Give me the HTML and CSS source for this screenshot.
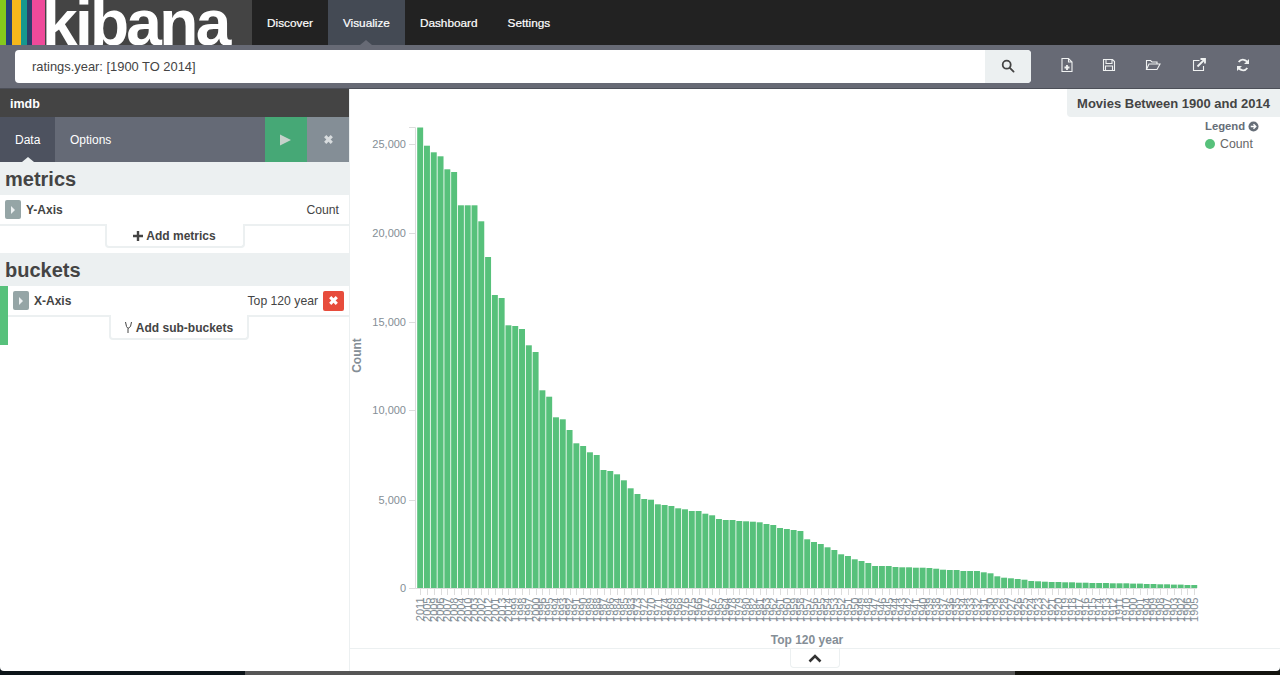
FILE: index.html
```html
<!DOCTYPE html>
<html lang="en">
<head>
<meta charset="utf-8">
<title>Visualize - Kibana</title>
<link rel="stylesheet" href="styles.css">
</head>
<body>
<div class="window">
  <header class="navbar">
    <div class="logo">
      <span class="stripe s1"></span><span class="stripe s2"></span><span class="stripe s3"></span><span class="stripe s4"></span><span class="stripe s5"></span><span class="stripe s6"></span>
      <span class="wordmark">kibana</span>
    </div>
    <nav class="nav-links">
      <a class="nav-link">Discover</a>
      <a class="nav-link active">Visualize</a>
      <a class="nav-link">Dashboard</a>
      <a class="nav-link">Settings</a>
    </nav>
  </header>

  <div class="querybar">
    <div class="search">
      <div class="search-input">ratings.year: [1900 TO 2014]</div>
      <div class="search-btn">
        <svg class="icon-search" viewBox="0 0 14 14"><circle cx="5.7" cy="5.7" r="4" /><path d="M8.8 8.8l3.8 3.8" /></svg>
      </div>
    </div>
    <div class="tools">
      <svg class="tool" viewBox="0 0 16 16"><path d="M3 1.500h6.500l3.500 3.500v9.500H3z M9.500 1.500V5H13" /><path class="thick" d="M8 8v5M5.500 10.500h5" /></svg>
      <svg class="tool tool-tight" viewBox="0 0 16 16"><path d="M2.500 2.500h9l2 2v9h-11z M5 2.500v4h6v-4 M4.500 13.500v-4.500h7v4.500" /></svg>
      <svg class="tool" viewBox="0 0 16 16"><path d="M1.500 12.500v-9h4l1.500 1.500h5v2 M1.500 12.500l2.500-5.500h11l-3 5.500z" /></svg>
      <svg class="tool tool-wide" viewBox="0 0 16 16"><path d="M12.500 9v4.500h-10v-10h6" /><path class="thick" d="M6.500 9.500l7-7M9.500 2h4.500v4.500" /></svg>
      <svg class="tool" viewBox="0 0 16 16"><path class="thick" d="M13 6.500a5.200 5.200 0 0 0-9.300-1.500M3 9.500a5.200 5.200 0 0 0 9.300 1.500" /><path class="solid" d="M14 2v5h-5zM2 14V9h5z" /></svg>
    </div>
  </div>

  <div class="workspace">
    <aside class="sidebar">
      <div class="index-title">imdb</div>
      <div class="tabs">
        <div class="tab active">Data</div>
        <div class="tab">Options</div>
        <div class="tab-spacer"></div>
        <div class="action run"><svg class="play" viewBox="0 0 12 12"><path d="M0 0l12 6-12 6z" /></svg></div>
        <div class="action cancel"><svg class="cross" viewBox="0 0 10 10"><path d="M2 2l6 6M8 2l-6 6" /></svg></div>
      </div>

      <h2 class="group-title">metrics</h2>
      <div class="agg-row">
        <span class="handle"><i class="caret"></i></span>
        <span class="agg-name">Y-Axis</span>
        <span class="agg-value">Count</span>
      </div>
      <div class="add-btn"><svg class="plus" viewBox="0 0 10 10"><path d="M5 0v10M0 5h10" /></svg>Add metrics</div>

      <h2 class="group-title buckets">buckets</h2>
      <div class="bucket">
        <div class="agg-row">
          <span class="handle"><i class="caret"></i></span>
          <span class="agg-name">X-Axis</span>
          <span class="agg-value">Top 120 year</span>
          <span class="remove"><svg class="cross white" viewBox="0 0 10 10"><path d="M2 2l6 6M8 2l-6 6" /></svg></span>
        </div>
        <div class="add-btn"><svg class="fork" viewBox="0 0 9 13"><path d="M1.500 1l1 4.500 1.500 2v4.500M7.500 1l-1 4.500-2.500 2" /></svg>Add sub-buckets</div>
      </div>
    </aside>

    <main class="content">
      <div class="vis-title">Movies Between 1900 and 2014</div>
      <div class="chart-area">
        <svg id="chart" class="chart" viewBox="350 89 930 559"></svg>
        <div class="legend">
          <div class="legend-head">Legend
            <svg class="legend-arrow" viewBox="0 0 12 12"><circle cx="6" cy="6" r="5.500" /><path d="M3 6h5M6 3.500L8.500 6 6 8.500" /></svg>
          </div>
          <div class="legend-item"><i class="dot"></i>Count</div>
        </div>
      </div>
      <div class="spy-bar">
        <div class="spy-toggle"><svg class="chevron" viewBox="0 0 14 9"><path d="M1.500 7.500L7 2l5.500 5.500" /></svg></div>
      </div>
    </main>
  </div>
</div>
<div class="desktop">
  <div class="desk-dark"></div>
  <div class="desk-gray"></div>
  <div class="desk-photo"></div>
</div>
<script src="chart.js"></script>
</body>
</html>
```

FILE: styles.css
```css
* { box-sizing: border-box; }
html, body { margin: 0; padding: 0; }
body {
  width: 1280px;
  height: 675px;
  overflow: hidden;
  background: #0d1519;
  font-family: "Liberation Sans", Arial, sans-serif;
  font-size: 12.5px;
  color: #444;
}
.window {
  height: 671px;
  display: flex;
  flex-direction: column;
  background: #fff;
  border-radius: 0 0 4px 4px;
  overflow: hidden;
}

/* navbar */
.navbar { height: 45px; flex: none; display: flex; background: #222; }
.logo {
  width: 252px;
  height: 45px;
  display: flex;
  background: #444;
  overflow: hidden;
}
.stripe { height: 45px; flex: none; }
.s1 { width: 6px; background: #85c91c; }
.s2 { width: 6px; background: #24407a; }
.s3 { width: 9px; background: #f5b81c; }
.s4 { width: 6px; background: #16978f; }
.s5 { width: 5px; background: #2b3f6a; }
.s6 { width: 13px; background: #ee4a9a; }
.wordmark {
  font-size: 64px;
  line-height: 45px;
  font-weight: 700;
  letter-spacing: -2.7px;
  color: #fff;
  margin: 1px 0 0 -3px;
}
.nav-links { display: flex; }
.nav-link {
  display: flex;
  align-items: center;
  padding: 0 15px;
  font-size: 11.8px;
  color: #fff;
  -webkit-text-stroke: 0.2px #fff;
  position: relative;
}
.nav-link.active { background: #444a54; }
.nav-link.active::after {
  content: "";
  position: absolute;
  left: 50%;
  bottom: 0;
  margin-left: -6px;
  border-left: 6px solid transparent;
  border-right: 6px solid transparent;
  border-bottom: 5px solid #676a75;
}

/* query bar */
.querybar {
  height: 44px;
  flex: none;
  display: flex;
  align-items: center;
  padding: 0 0 1px 15px;
  background: #676a75;
  border-bottom: 1px solid #4c4f58;
}
.search {
  width: 1016px;
  height: 33px;
  display: flex;
  border-radius: 4px;
  overflow: hidden;
  background: #fff;
}
.search-input {
  flex: 1;
  display: flex;
  align-items: center;
  padding-left: 17px;
  font-size: 12.9px;
  color: #444;
}
.search-btn {
  width: 46px;
  display: flex;
  align-items: center;
  justify-content: center;
  background: #ecf0f1;
}
.icon-search { width: 14px; height: 14px; fill: none; stroke: #444; stroke-width: 1.800; stroke-linecap: round; }
.tools { display: flex; gap: 28px; margin: -2px 0 0 28px; }
.tool { width: 16px; height: 16px; fill: none; stroke: #f0f2f2; stroke-width: 1.100; }
.tool-tight { margin-left: -2px; }
.tool-wide { margin-left: 2px; }
.tool .thick { stroke-width: 1.800; }
.tool .solid { fill: #f0f2f2; stroke: none; }

/* layout */
.workspace { flex: 1; min-height: 0; display: flex; }
.sidebar {
  width: 350px;
  flex: none;
  border-right: 1px solid #ecf0f1;
  display: flex;
  flex-direction: column;
}
.index-title {
  height: 28px;
  flex: none;
  display: flex;
  align-items: center;
  padding: 1px 0 0 10px;
  background: #444;
  color: #fff;
  font-weight: 700;
  font-size: 12.5px;
}
.tabs { height: 45px; flex: none; display: flex; background: #656a76; color: #fff; }
.tab { display: flex; align-items: center; padding: 0 15px 0 15px; font-size: 12px; position: relative; }
.tab.active { width: 55px; background: #4d525f; }
.tab.active::after {
  content: "";
  position: absolute;
  left: 22px;
  bottom: 0;
  border-left: 6px solid transparent;
  border-right: 6px solid transparent;
  border-bottom: 5px solid #ecf0f1;
}
.tab-spacer { flex: 1; }
.action { width: 42px; display: flex; align-items: center; justify-content: center; }
.run { background: #46a876; padding-right: 2px; }
.cancel { background: #848e96; }
.play { width: 11px; height: 12px; fill: #c5d2cb; }
.cross { width: 11px; height: 11px; fill: none; stroke: #d8dcde; stroke-width: 2.800; }
.cross.white { stroke: #fff; }

.group-title {
  height: 33px;
  flex: none;
  margin: 0;
  padding-left: 5px;
  background: #ecf0f1;
  color: #444;
  font-size: 20px;
  line-height: 35px;
  font-weight: 700;
}
.group-title.buckets { margin-top: 5px; }
.agg-row {
  height: 31px;
  flex: none;
  display: flex;
  align-items: center;
  padding: 0 10px 0 5px;
  border-bottom: 2px solid #ecf0f1;
}
.handle {
  width: 16px;
  height: 19px;
  flex: none;
  display: flex;
  align-items: center;
  justify-content: center;
  border-radius: 2px;
  background: #95a5a6;
}
.caret {
  display: block;
  border-top: 4px solid transparent;
  border-bottom: 4px solid transparent;
  border-left: 4px solid #ecf0f1;
}
.agg-name { margin-left: 5px; font-weight: 700; font-size: 12px; }
.agg-value { margin-left: auto; font-size: 12.2px; }
.add-btn {
  width: 140px;
  height: 24px;
  flex: none;
  margin: -2px auto 0;
  padding-top: 2px;
  display: flex;
  align-items: center;
  justify-content: center;
  gap: 3px;
  background: #fff;
  border: 2px solid #ecf0f1;
  border-top: 0;
  border-radius: 0 0 4px 4px;
  font-weight: 700;
  font-size: 12px;
}
.bucket .add-btn { height: 25px; }
.plus { width: 10px; height: 10px; fill: none; stroke: #444; stroke-width: 2.400; }
.fork { width: 9px; height: 13px; fill: none; stroke: #444; stroke-width: 1; }
.bucket {
  height: 59px;
  flex: none;
  border-left: 8px solid #57c17b;
  display: flex;
  flex-direction: column;
}
.remove {
  width: 21px;
  height: 20px;
  flex: none;
  margin-left: 5px;
  display: flex;
  align-items: center;
  justify-content: center;
  border-radius: 2px;
  background: #e74c3c;
}
.bucket .agg-row { padding-right: 5px; }

/* content */
.content { flex: 1; min-width: 0; display: flex; flex-direction: column; position: relative; }
.vis-title {
  position: absolute;
  top: 0;
  right: 0;
  height: 28px;
  display: flex;
  align-items: center;
  padding: 0 10px;
  background: #ecf0f1;
  border-radius: 0 0 0 4px;
  font-weight: 700;
  font-size: 13px;
  color: #444;
}
.chart-area { flex: 1; min-height: 0; position: relative; }
.chart { display: block; width: 930px; height: 559px; }
.legend { position: absolute; top: 30px; left: 855px; color: #666; }
.legend-head { display: flex; align-items: center; gap: 3px; font-weight: 700; font-size: 11.3px; height: 14px; color: #666e78; }
.legend-arrow { width: 11px; height: 11px; fill: #666e78; }
.legend-arrow path { fill: none; stroke: #fff; stroke-width: 1.500; }
.legend-item { display: flex; align-items: center; gap: 5px; margin-top: 4px; font-size: 12.3px; color: #666; }
.dot { width: 10px; height: 10px; border-radius: 50%; background: #57c17b; }
.spy-bar {
  height: 23px;
  flex: none;
  border-top: 1px solid #ecf0f1;
  display: flex;
  justify-content: center;
}
.spy-toggle {
  width: 50px;
  height: 19px;
  display: flex;
  align-items: center;
  justify-content: center;
  border: 1px solid #ecf0f1;
  border-top: 0;
  border-radius: 0 0 4px 4px;
}
.chevron { width: 14px; height: 9px; fill: none; stroke: #333; stroke-width: 2.600; }

/* chart */
.bar { fill: #57c17b; }
.axis-line { stroke: #ddd; stroke-width: 1; fill: none; }
.tick-label { font-family: "Liberation Sans", Arial, sans-serif; fill: #848e96; font-size: 11px; }
.axis-title { font-family: "Liberation Sans", Arial, sans-serif; fill: #848e96; font-size: 12px; font-weight: 700; }

/* what shows below the window */
.desktop { height: 4px; display: flex; }
.desk-dark { width: 245px; background: #0d1519; }
.desk-gray { width: 770px; background: #565656; }
.desk-photo { flex: 1; background: #14140f; }
```

FILE: chart.js
```js
var tops = [127.5,145.7,152.3,156.3,169.3,172,205.3,205.3,205.3,221.3,257,295,298,325.3,326,329,345.3,352,
390.3,396.7,417.3,419.3,430,443.3,446,452.3,455,470,471,474.3,480.3,488.3,494,499,499.7,504.3,505,506,508.3,509.3,511,511,513.7,515.3,519,520,520,521,
521.3,521.7,522.3,524,525,528,529,530,531,539.3,542,544,547.3,550,554.3,556,559.3,561,563,566,566,566,567,567.3,567.3,567.7,567.7,568,568.7,569.7,570,570,571,571,
571,572.3,573.3,576.3,577.7,578.3,579,579.7,581,581.3,581.7,582,582,582.3,582.3,582.7,582.7,583,583,583,583.3,583.3,583.3,583.6,583.6,584,584,584.3,584.3,584.6,584.6,585,585];

var years = [2011,2005,2009,2006,2007,2008,2004,2010,2003,2002,2012,2001,2013,2014,
1999,1998,1997,2000,1996,1995,1994,1993,1992,1991,1990,1989,1988,1987,1986,1984,1985,1983,
1973,1972,1970,1971,1974,1969,1968,1976,1975,1966,1977,1967,1965,1964,1978,1979,1980,1982,1981,
1963,1962,1961,1960,1959,1958,1957,1956,1955,1954,1953,1952,1951,1950,1949,1948,1947,1946,1945,1944,1943,1942,1941,1940,1939,1938,1937,1936,1935,1934,1933,1932,1931,1930,1929,1928,1927,1926,1925,1924,1923,1922,1921,1920,
1919,1918,1917,1916,1915,1914,1913,1912,1911,1910,
1900,1901,1904,1909,1908,1907,1903,1902,1906,1905];

var NS = "http://www.w3.org/2000/svg";
var svg = document.getElementById("chart");
var X0 = 417.2, STEP = 6.79, BAR = 5.95, BASE = 588;

function el(name, attrs, text) {
  var node = document.createElementNS(NS, name);
  for (var k in attrs) node.setAttribute(k, attrs[k]);
  if (text) node.textContent = text;
  svg.appendChild(node);
}

tops.forEach(function (top, i) {
  var x = X0 + i * STEP;
  el("rect", { "class": "bar", x: x, y: top, width: BAR, height: BASE - top });
  var cx = Math.round(x + BAR / 2) + 0.5;
  el("path", { "class": "axis-line", d: "M" + cx + " 589V595" });
  el("text", {
    "class": "tick-label",
    "text-anchor": "end",
    transform: "translate(" + (x + BAR / 2 + 3.9) + " 597.5) rotate(-90)"
  }, String(years[i]));
});

el("path", { "class": "axis-line", d: "M409 127.5H415.5V588.5H409M415.5 588.5H1197" });

[["25,000", 144], ["20,000", 233], ["15,000", 322], ["10,000", 410], ["5,000", 499.5], ["0", 588]].forEach(function (t) {
  var y = Math.round(t[1]) + 0.5;
  el("path", { "class": "axis-line", d: "M409 " + y + "H415" });
  el("text", { "class": "tick-label", x: 406, y: t[1] + 4, "text-anchor": "end" }, t[0]);
});

el("text", { "class": "axis-title", "text-anchor": "middle", transform: "translate(361 355.5) rotate(-90)" }, "Count");
el("text", { "class": "axis-title", x: 807, y: 644, "text-anchor": "middle" }, "Top 120 year");
```
